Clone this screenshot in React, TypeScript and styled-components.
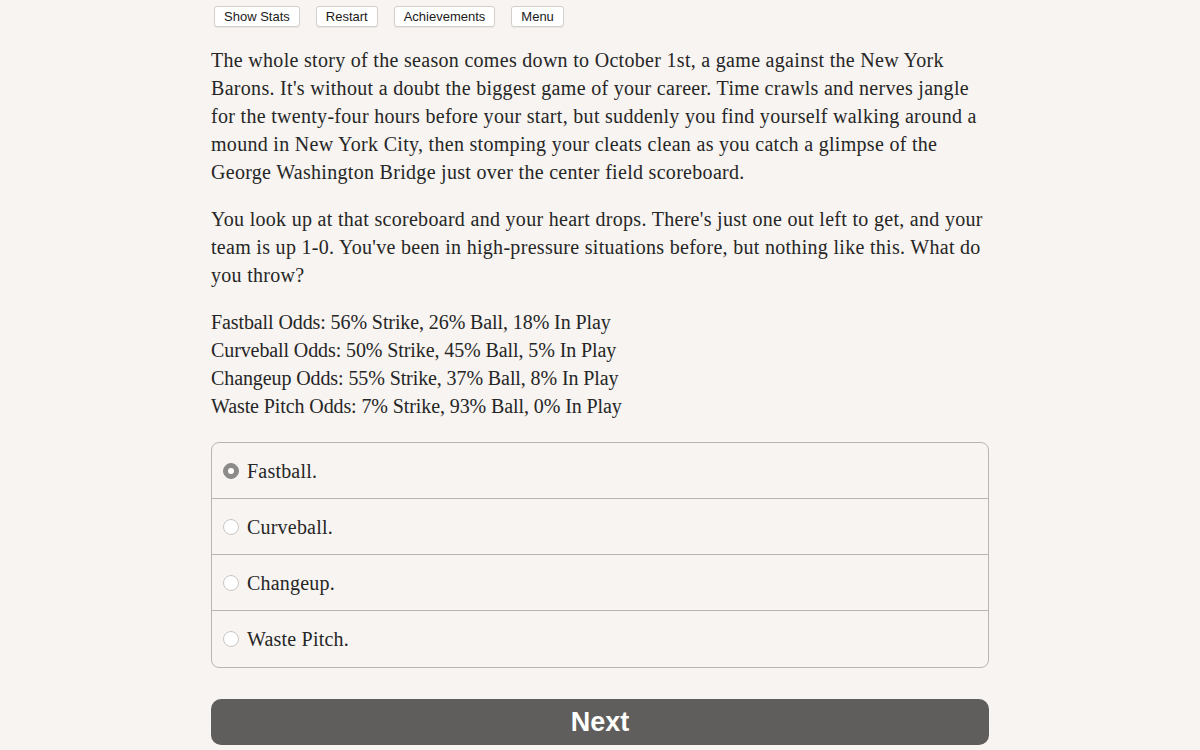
import React, { useState } from "react";
import styled, { createGlobalStyle } from "styled-components";

const Global = createGlobalStyle`
  html, body { margin: 0; padding: 0; background: #f7f4f1; }
  body { font-family: "Liberation Serif", serif; color: #262626; }
`;

const Page = styled.div`
  width: 778px;
  margin: 0 auto;
  padding-top: 6px;
`;

const Toolbar = styled.div`
  display: flex;
  gap: 16px;
  padding-left: 3px;
`;

const TopButton = styled.button`
  font-family: "Liberation Sans", Arial, sans-serif;
  font-size: 13px;
  color: #1a1a1a;
  background: #fff;
  border: 1px solid #d3d0cc;
  border-radius: 3px;
  height: 21px;
  padding: 0 9px;
  box-shadow: 0 1px 1px rgba(0,0,0,0.06);
`;

const Story = styled.div`
  margin-top: 19px;
  font-size: 20px;
  line-height: 28px;
`;

const Para = styled.p`
  margin: 0 0 19px 0;
  letter-spacing: 0.3px;
`;

const OddsList = styled.div`
  margin-bottom: 22px;
  letter-spacing: -0.1px;
`;

const Choices = styled.div`
  border: 1px solid #b9b6b2;
  border-radius: 8px;
  overflow: hidden;
`;

const Choice = styled.label`
  display: flex;
  align-items: center;
  height: 55px;
  padding-left: 11px;
  border-top: 1px solid #b9b6b2;
  font-size: 20px;
  letter-spacing: 0.2px;
  &:first-child { border-top: none; }
  &:last-child { height: 56px; }
`;

const Radio = styled.span<{ $on: boolean }>`
  width: 16px;
  height: 16px;
  border-radius: 50%;
  box-sizing: border-box;
  margin-right: 8px;
  background: ${p => (p.$on ? "#8c8b8a" : "#fff")};
  border: 1px solid ${p => (p.$on ? "#8c8b8a" : "#c9c7c4")};
  display: flex;
  align-items: center;
  justify-content: center;
  &::after {
    content: "";
    width: 6px;
    height: 6px;
    border-radius: 50%;
    background: #fff;
    display: ${p => (p.$on ? "block" : "none")};
  }
`;

const NextButton = styled.button`
  display: block;
  width: 100%;
  margin-top: 31px;
  height: 46px;
  border: none;
  border-radius: 10px;
  background: #5f5e5c;
  color: #fff;
  font-family: "Liberation Sans", Arial, sans-serif;
  font-weight: bold;
  font-size: 27px;
`;

const options = ["Fastball.", "Curveball.", "Changeup.", "Waste Pitch."];

export default function App() {
  const [sel, setSel] = useState(0);
  return (
    <>
      <Global />
      <Page>
        <Toolbar>
          <TopButton>Show Stats</TopButton>
          <TopButton>Restart</TopButton>
          <TopButton>Achievements</TopButton>
          <TopButton>Menu</TopButton>
        </Toolbar>
        <Story>
          <Para>
            The whole story of the season comes down to October 1st, a game against the New York Barons. It's without a doubt the biggest game of your career. Time crawls and nerves jangle for the twenty-four hours before your start, but suddenly you find yourself walking around a mound in New York City, then stomping your cleats clean as you catch a glimpse of the George Washington Bridge just over the center field scoreboard.
          </Para>
          <Para>
            You look up at that scoreboard and your heart drops. There's just one out left to get, and your team is up 1-0. You've been in high-pressure situations before, but nothing like this. What do you throw?
          </Para>
          <OddsList>
            <div>Fastball Odds: 56% Strike, 26% Ball, 18% In Play</div>
            <div>Curveball Odds: 50% Strike, 45% Ball, 5% In Play</div>
            <div>Changeup Odds: 55% Strike, 37% Ball, 8% In Play</div>
            <div>Waste Pitch Odds: 7% Strike, 93% Ball, 0% In Play</div>
          </OddsList>
          <Choices>
            {options.map((o, i) => (
              <Choice key={o} onClick={() => setSel(i)}>
                <Radio $on={sel === i} />
                {o}
              </Choice>
            ))}
          </Choices>
          <NextButton>Next</NextButton>
        </Story>
      </Page>
    </>
  );
}
